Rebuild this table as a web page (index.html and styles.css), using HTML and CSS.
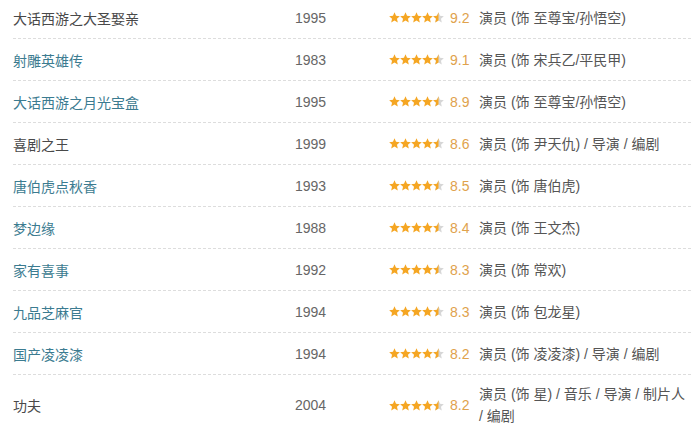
FILE: index.html
```html
<!DOCTYPE html>
<html lang="zh">
<head>
<meta charset="utf-8">
<title>作品列表</title>
<link rel="stylesheet" href="styles.css">
</head>
<body>
<svg class="defs" width="0" height="0" aria-hidden="true">
  <defs>
    <polygon id="star" points="5.5,0.3 7.03,3.8 10.83,4.17 7.97,6.7 8.79,10.43 5.5,8.5 2.21,10.43 3.03,6.7 0.17,4.17 3.97,3.8"/>
    <polygon id="halfstar" points="5.5,0.3 3.97,3.8 0.17,4.17 3.03,6.7 2.21,10.43 5.5,8.5"/>
    <g id="stars45">
      <use href="#star" x="0" fill="#f5a623"/>
      <use href="#star" x="11" fill="#f5a623"/>
      <use href="#star" x="22" fill="#f5a623"/>
      <use href="#star" x="33" fill="#f5a623"/>
      <use href="#star" x="44" fill="#d6d6d6"/>
      <use href="#halfstar" x="44" fill="#f5a623"/>
    </g>
  </defs>
</svg>
<ul class="works">
  <li class="row"><span class="title">大话西游之大圣娶亲</span><span class="year">1995</span><span class="rating"><svg class="stars" width="55" height="11" viewBox="0 0 55 11"><use href="#stars45"/></svg><span class="score">9.2</span></span><span class="role">演员 (饰 至尊宝/孙悟空)</span></li>
  <li class="row"><a class="title link">射雕英雄传</a><span class="year">1983</span><span class="rating"><svg class="stars" width="55" height="11" viewBox="0 0 55 11"><use href="#stars45"/></svg><span class="score">9.1</span></span><span class="role">演员 (饰 宋兵乙/平民甲)</span></li>
  <li class="row"><a class="title link">大话西游之月光宝盒</a><span class="year">1995</span><span class="rating"><svg class="stars" width="55" height="11" viewBox="0 0 55 11"><use href="#stars45"/></svg><span class="score">8.9</span></span><span class="role">演员 (饰 至尊宝/孙悟空)</span></li>
  <li class="row"><span class="title">喜剧之王</span><span class="year">1999</span><span class="rating"><svg class="stars" width="55" height="11" viewBox="0 0 55 11"><use href="#stars45"/></svg><span class="score">8.6</span></span><span class="role">演员 (饰 尹天仇) / 导演 / 编剧</span></li>
  <li class="row"><a class="title link">唐伯虎点秋香</a><span class="year">1993</span><span class="rating"><svg class="stars" width="55" height="11" viewBox="0 0 55 11"><use href="#stars45"/></svg><span class="score">8.5</span></span><span class="role">演员 (饰 唐伯虎)</span></li>
  <li class="row"><a class="title link">梦边缘</a><span class="year">1988</span><span class="rating"><svg class="stars" width="55" height="11" viewBox="0 0 55 11"><use href="#stars45"/></svg><span class="score">8.4</span></span><span class="role">演员 (饰 王文杰)</span></li>
  <li class="row"><a class="title link">家有喜事</a><span class="year">1992</span><span class="rating"><svg class="stars" width="55" height="11" viewBox="0 0 55 11"><use href="#stars45"/></svg><span class="score">8.3</span></span><span class="role">演员 (饰 常欢)</span></li>
  <li class="row"><a class="title link">九品芝麻官</a><span class="year">1994</span><span class="rating"><svg class="stars" width="55" height="11" viewBox="0 0 55 11"><use href="#stars45"/></svg><span class="score">8.3</span></span><span class="role">演员 (饰 包龙星)</span></li>
  <li class="row"><a class="title link">国产凌凌漆</a><span class="year">1994</span><span class="rating"><svg class="stars" width="55" height="11" viewBox="0 0 55 11"><use href="#stars45"/></svg><span class="score">8.2</span></span><span class="role">演员 (饰 凌凌漆) / 导演 / 编剧</span></li>
  <li class="row last"><span class="title">功夫</span><span class="year">2004</span><span class="rating"><svg class="stars" width="55" height="11" viewBox="0 0 55 11"><use href="#stars45"/></svg><span class="score">8.2</span></span><span class="role">演员 (饰 星) / 音乐 / 导演 / 制片人 / 编剧</span></li>
</ul>
</body>
</html>
```
FILE: styles.css
```css
html, body {
  margin: 0;
  padding: 0;
  background: #ffffff;
}
body {
  font-family: "Liberation Sans", "Noto Sans CJK SC", sans-serif;
  font-size: 14px;
  color: #494949;
  overflow: hidden;
}
.defs {
  position: absolute;
  width: 0;
  height: 0;
}
.works {
  list-style: none;
  margin: -3px 0 0 13px;
  padding: 0;
  width: 678px;
}
.row {
  display: flex;
  align-items: center;
  height: 41px;
  border-bottom: 1px dashed #dddddd;
}
.row.last {
  height: auto;
  padding: 8px 0;
  border-bottom: none;
}
.title {
  width: 282px;
  flex: none;
  color: #494949;
  text-decoration: none;
  white-space: nowrap;
}
.title.link {
  color: #3b7b90;
}
.year {
  width: 94px;
  flex: none;
  color: #666666;
}
.rating {
  width: 90px;
  flex: none;
  display: flex;
  align-items: center;
}
.stars {
  display: block;
  flex: none;
}
.score {
  margin-left: 6px;
  color: #e0a24c;
}
.role {
  width: 210px;
  flex: none;
  color: #555555;
  line-height: 22px;
}
```
